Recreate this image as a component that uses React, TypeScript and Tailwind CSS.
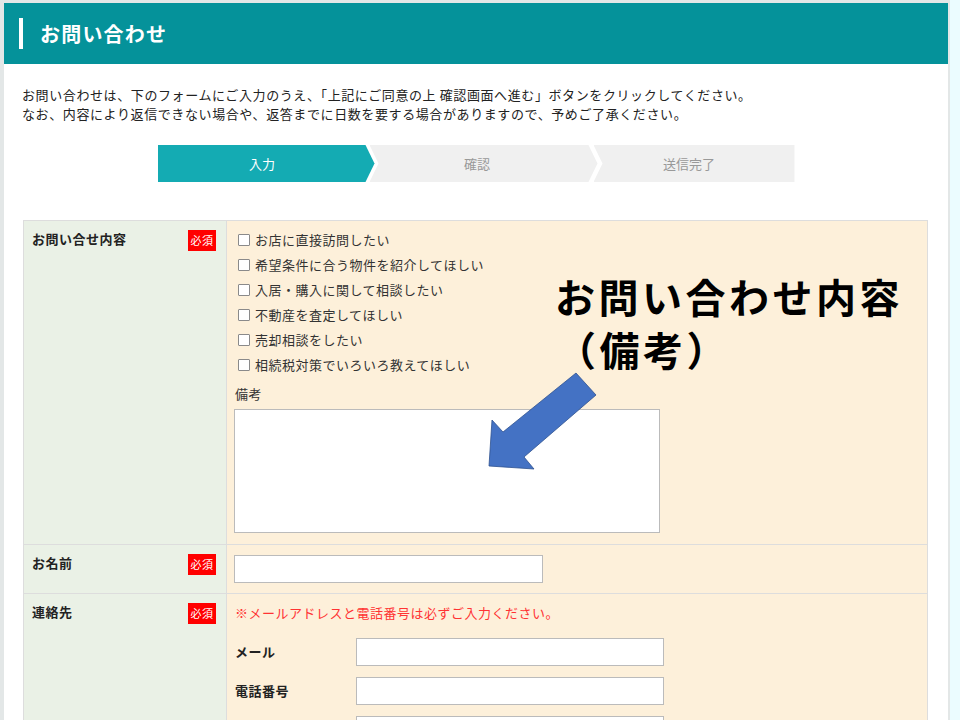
const jp = { fontFamily: '"Noto Sans CJK JP", "Noto Sans", sans-serif' };

const options = [
    "お店に直接訪問したい",
    "希望条件に合う物件を紹介してほしい",
    "入居・購入に関して相談したい",
    "不動産を査定してほしい",
    "売却相談をしたい",
    "相続税対策でいろいろ教えてほしい",
];

function Required() {
    return (
        <span className="w-[28px] h-[21px] bg-[#ff0000] text-white text-[11px] leading-[21px] text-center shrink-0">必須</span>
    );
}

function Label({ text, top }: { text: string; top: string }) {
    return (
        <div className={`w-[203px] shrink-0 bg-[#eaf1e6] border-r border-[#dddddd] flex justify-between pl-[8px] pr-[10px] ${top}`}>
            <span className="font-bold text-[13px] tracking-[0.5px] leading-[19px] text-[#222] -mt-[1px]">{text}</span>
            <Required />
        </div>
    );
}

function Steps() {
    return (
        <div className="flex justify-center mt-[22px]">
            <div className="w-[217px] h-[37px] bg-[#14abb3] text-white text-[13px] flex items-center justify-center pr-[8px] [clip-path:polygon(0_0,calc(100%-9px)_0,100%_50%,calc(100%-9px)_100%,0_100%)]">
                入力
            </div>
            <div className="-ml-[5px] w-[228px] h-[37px] bg-[#f0f0f0] text-[#999] text-[13px] flex items-center justify-center pr-[13px] [clip-path:polygon(0_0,calc(100%-9px)_0,100%_50%,calc(100%-9px)_100%,0_100%,9px_50%)]">
                確認
            </div>
            <div className="-ml-[4px] w-[201px] h-[37px] bg-[#f0f0f0] text-[#999] text-[13px] flex items-center justify-center pr-[10px] [clip-path:polygon(0_0,100%_0,100%_100%,0_100%,9px_50%)]">
                送信完了
            </div>
        </div>
    );
}

export default function App() {
    return (
        <div className="relative w-[960px] h-[720px] overflow-hidden bg-[#ebfcff] text-[#333]" style={jp}>
            <div className="w-[950px] h-full bg-white border-t-[3px] border-l-4 border-r-2 border-[#e3e7e7]">
                <div className="h-[61px] bg-[#05929a] flex items-center pl-[15px] gap-[17px]">
                    <span className="w-[4px] h-[31px] bg-white" />
                    <h1 className="text-white font-bold text-[20px] tracking-[1.2px]">お問い合わせ</h1>
                </div>

                <div className="pt-[21px] pl-[18px] text-[13px] tracking-[0.6px] leading-[19px] text-[#222]">
                    <p>お問い合わせは、下のフォームにご入力のうえ、「上記にご同意の上 確認画面へ進む」ボタンをクリックしてください。</p>
                    <p>なお、内容により返信できない場合や、返答までに日数を要する場合がありますので、予めご了承ください。</p>
                </div>

                <Steps />

                <div className="mt-[38px] ml-[19px] w-[905px] border border-[#dddddd] text-[13px] tracking-[0.5px]">
                    <div className="flex border-b border-[#dddddd]">
                        <Label text="お問い合せ内容" top="pt-[9px]" />
                        <div className="flex-1 bg-[#fdf0da] pt-[6px] pl-[7px] pb-[11px]">
                            {options.map((o) => (
                                <div key={o} className="h-[25px] flex items-center gap-[5px] ml-[4px]">
                                    <span className="w-[12px] h-[12px] border border-[#8a8a8a] bg-white rounded-[1px]" />
                                    <span className="leading-[19px]">{o}</span>
                                </div>
                            ))}
                            <div className="mt-[7px] leading-[19px] pl-[1px]">備考</div>
                            <div className="mt-[6px] w-[426px] h-[124px] bg-white border border-[#bbbbbb]" />
                        </div>
                    </div>

                    <div className="flex border-b border-[#dddddd]">
                        <Label text="お名前" top="pt-[9px]" />
                        <div className="flex-1 bg-[#fdf0da] pt-[10px] pb-[10px] pl-[7px]">
                            <div className="w-[309px] h-[28px] bg-white border border-[#bbbbbb]" />
                        </div>
                    </div>

                    <div className="flex h-[140px]">
                        <Label text="連絡先" top="pt-[9px]" />
                        <div className="flex-1 bg-[#fdf0da] pt-[9px] pl-[8px]">
                            <p className="text-[#ff3333] leading-[19px]">※メールアドレスと電話番号は必ずご入力ください。</p>
                            <div className="mt-[16px] flex flex-col gap-[11px]">
                                {["メール", "電話番号", ""].map((l, i) => (
                                    <div key={i} className="flex items-center">
                                        <span className="w-[121px] font-bold text-[#222]">{l}</span>
                                        <div className="w-[308px] h-[28px] bg-white border border-[#bbbbbb]" />
                                    </div>
                                ))}
                            </div>
                        </div>
                    </div>
                </div>
            </div>

            <div className="absolute left-[555px] top-[270px] text-black font-bold text-[40px] tracking-[3.5px] leading-[53px]">
                <div>お問い合わせ内容</div>
                <div className="pl-[1px]">（備考）</div>
            </div>

            <svg className="absolute left-0 top-0 pointer-events-none" width="960" height="720" viewBox="0 0 960 720">
                <polygon
                    points="489,466 492,420 503,432 576,373 596,395 524,457 534,469"
                    fill="#4472c4"
                    stroke="#2f528f"
                    strokeWidth="0.8"
                />
            </svg>
        </div>
    );
}
